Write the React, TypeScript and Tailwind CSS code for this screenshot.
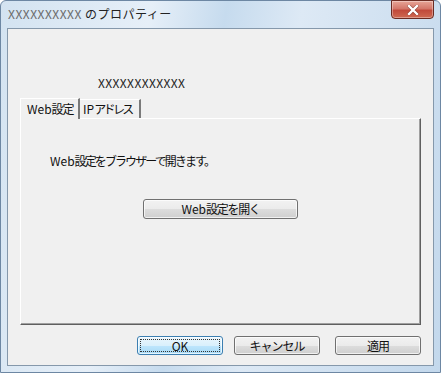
import React from 'react'

const font = "font-['Noto_Sans_CJK_JP',sans-serif]"

function VistaButton({ label, primary = false, className = '' }: { label: React.ReactNode; primary?: boolean; className?: string }) {
  const look = primary
    ? 'border-[#3c7fb1] bg-[linear-gradient(to_bottom,#eaf6fd_0%,#d9f0fc_50%,#bee6fd_50%,#a7d9f5_100%)]'
    : 'border-[#707070] bg-[linear-gradient(to_bottom,#f2f2f2_0%,#ebebeb_50%,#dddddd_50%,#cfcfcf_100%)]'
  return (
    <button className={`relative h-[19px] rounded-[3px] border ${look} shadow-[inset_0_0_0_1px_rgba(255,255,255,0.7)] text-[12px] leading-[14px] text-[#111] whitespace-nowrap flex items-center justify-center ${className}`}>
      {primary && <span className="absolute inset-[2px] border border-dotted border-[#333]" />}
      <span className="relative">{label}</span>
    </button>
  )
}

export default function App() {
  return (
    <div className={`w-[441px] h-[373px] flex flex-col border border-[#6d87a3] rounded-t-[6px] bg-[linear-gradient(100deg,#d3e3f1_0%,#e6eff8_30%,#c6dbee_45%,#dde9f5_60%,#c3d8ec_100%)] ${font}`}>
      {/* title bar */}
      <div className="h-[27px] flex items-start">
        <div className="pl-[7px] pt-[5px] text-[12px] leading-[16px] tracking-[0.5px] whitespace-nowrap">
          <span className="text-[#6a6a6a]">XXXXXXXXXX</span>
          <span className="text-[#222]"> のプロパティー</span>
        </div>
        <div className="ml-auto mr-[6px] -mt-px w-[43px] h-[19px] rounded-b-[4px] border border-[#6b2b22] bg-[linear-gradient(to_bottom,#e7a597_0%,#d4776a_45%,#c14a3b_55%,#cf6a52_100%)] shadow-[inset_0_0_0_1px_rgba(255,255,255,0.35)] flex items-center justify-center">
          <svg width="12" height="10" viewBox="0 0 12 10">
            <path d="M2 1 L10 9 M10 1 L2 9" stroke="#5a1a12" strokeWidth="3.4" strokeLinecap="square" opacity="0.5" />
            <path d="M2 1 L10 9 M10 1 L2 9" stroke="#ffffff" strokeWidth="2.4" strokeLinecap="square" />
          </svg>
        </div>
      </div>

      {/* client area */}
      <div className="mx-[6px] mb-[6px] flex-1 border border-[#8598ab] bg-[#f0f0f0] flex flex-col px-[12px]">
        <div className="pt-[47px] pl-[78px] text-[12px] leading-[14px] tracking-[0.4px] text-[#222]">XXXXXXXXXXXX</div>

        <div className="mt-[7px] flex items-end h-[21px] whitespace-nowrap">
          <div className="relative z-10 w-[60px] h-[21px] -mb-px bg-[#f0f0f0] border-t border-l border-white border-r-2 border-r-[#7a7a7a] flex items-center pl-[6px] text-[12px] leading-[14px] text-[#111]">
            Web<span className="tracking-[-1px]">設定</span>
          </div>
          <div className="w-[61px] h-[19px] border-t border-white border-r-2 border-r-[#7a7a7a] flex items-center pl-[3px] text-[12px] leading-[14px] text-[#111]">
            IP<span className="tracking-[-2.6px]">アドレス</span>
          </div>
        </div>

        <div className="h-[207px] border-t border-l border-white border-r border-b border-r-[#5f5f5f] border-b-[#5f5f5f] shadow-[inset_-1px_-1px_0_#a0a0a0] flex flex-col">
          <div className="pt-[35px] pl-[29px] text-[12px] leading-[14px] text-[#111] whitespace-nowrap">
            Web<span className="tracking-[-1.9px]">設定をブラウザーで開きます。</span>
          </div>
          <VistaButton label={<>Web<span className="tracking-[-1.3px]">設定を開く</span></>} className="mt-[31px] ml-[122px] w-[155px] h-[20px]" />
        </div>

        <div className="mt-[11px] flex justify-end">
          <VistaButton label="OK" primary className="w-[86px] mr-[11px]" />
          <VistaButton label={<span className="tracking-[-1px]">キャンセル</span>} className="w-[86px] mr-[15px]" />
          <VistaButton label={<span className="tracking-[-1px]">適用</span>} className="w-[86px]" />
        </div>
      </div>
    </div>
  )
}
